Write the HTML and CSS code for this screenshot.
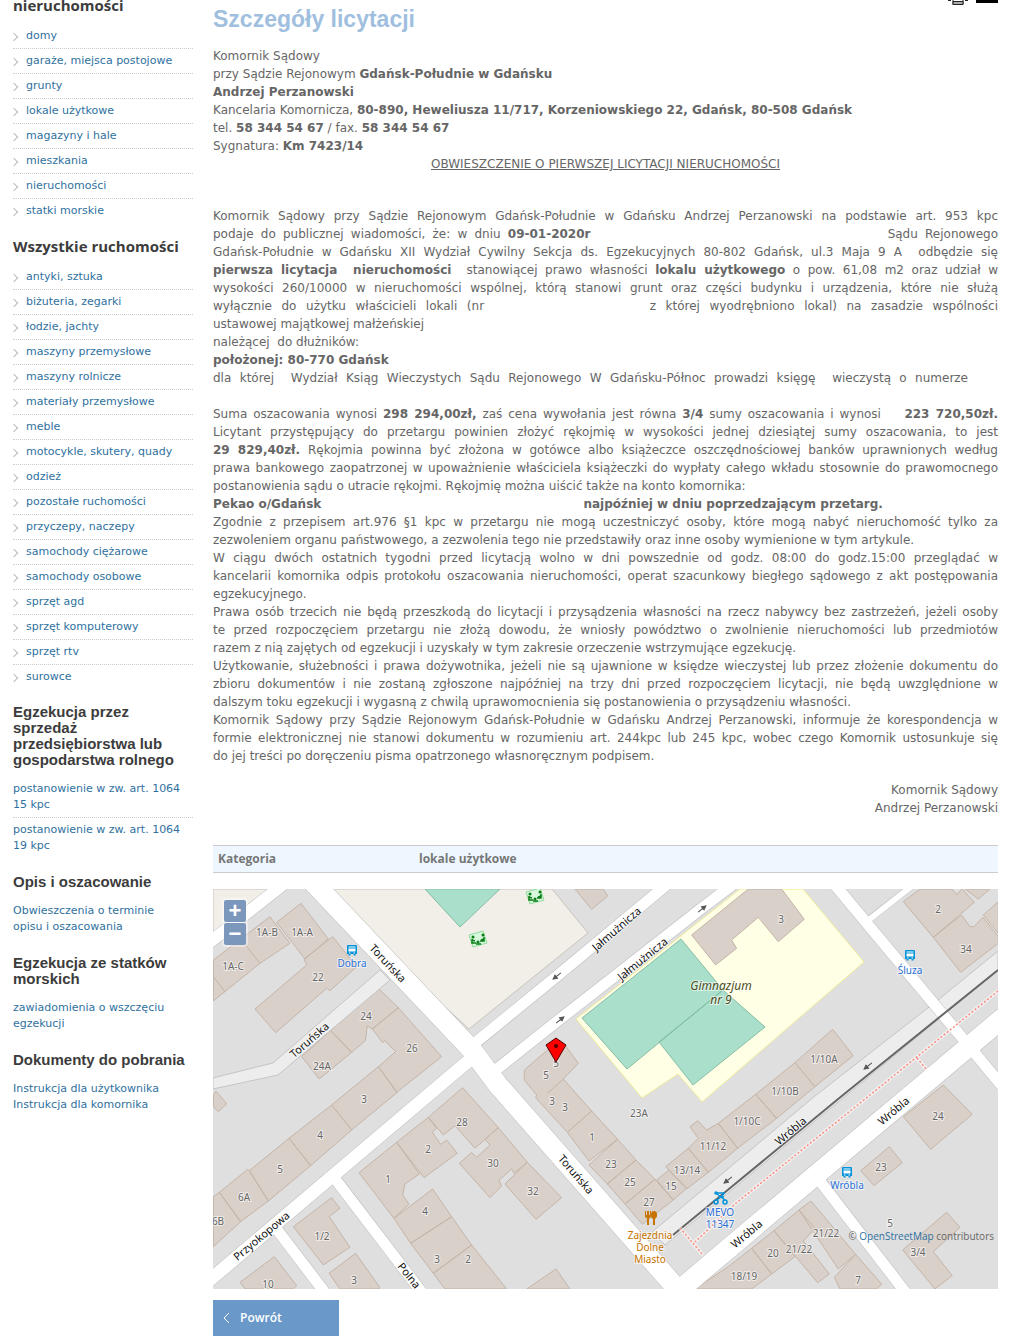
FILE: index.html
```html
<!DOCTYPE html>
<html lang="pl">
<head>
<meta charset="utf-8">
<title>Szczegóły licytacji</title>
<link rel="stylesheet" href="styles.css">
</head>
<body>
<div class="page">
<nav class="sidebar">
  <h2 class="menu-title">nieruchomości</h2>
  <ul class="menu">
    <li><a href="#">domy</a></li>
    <li><a href="#">garaże, miejsca postojowe</a></li>
    <li><a href="#">grunty</a></li>
    <li><a href="#">lokale użytkowe</a></li>
    <li><a href="#">magazyny i hale</a></li>
    <li><a href="#">mieszkania</a></li>
    <li><a href="#">nieruchomości</a></li>
    <li><a href="#">statki morskie</a></li>
  </ul>
  <h2 class="menu-title">Wszystkie ruchomości</h2>
  <ul class="menu">
    <li><a href="#">antyki, sztuka</a></li>
    <li><a href="#">biżuteria, zegarki</a></li>
    <li><a href="#">łodzie, jachty</a></li>
    <li><a href="#">maszyny przemysłowe</a></li>
    <li><a href="#">maszyny rolnicze</a></li>
    <li><a href="#">materiały przemysłowe</a></li>
    <li><a href="#">meble</a></li>
    <li><a href="#">motocykle, skutery, quady</a></li>
    <li><a href="#">odzież</a></li>
    <li><a href="#">pozostałe ruchomości</a></li>
    <li><a href="#">przyczepy, naczepy</a></li>
    <li><a href="#">samochody ciężarowe</a></li>
    <li><a href="#">samochody osobowe</a></li>
    <li><a href="#">sprzęt agd</a></li>
    <li><a href="#">sprzęt komputerowy</a></li>
    <li><a href="#">sprzęt rtv</a></li>
    <li><a href="#">surowce</a></li>
  </ul>
  <section class="block">
    <h2>Egzekucja przez sprzedaż przedsiębiorstwa lub gospodarstwa rolnego</h2>
    <ul class="links divided">
      <li><a href="#">postanowienie w zw. art. 1064 15 kpc</a></li>
      <li><a href="#">postanowienie w zw. art. 1064 19 kpc</a></li>
    </ul>
  </section>
  <section class="block">
    <h2>Opis i oszacowanie</h2>
    <ul class="links"><li><a href="#">Obwieszczenia o terminie opisu i oszacowania</a></li></ul>
  </section>
  <section class="block">
    <h2>Egzekucja ze statków morskich</h2>
    <ul class="links"><li><a href="#">zawiadomienia o wszczęciu egzekucji</a></li></ul>
  </section>
  <section class="block">
    <h2>Dokumenty do pobrania</h2>
    <ul class="links">
      <li><a href="#">Instrukcja dla użytkownika</a></li>
      <li><a href="#">Instrukcja dla komornika</a></li>
    </ul>
  </section>
</nav>

<main class="content">
  <header class="head">
    <h1>Szczegóły licytacji</h1>
    <div class="tools">
      <a href="#" aria-label="Drukuj"><svg width="20" height="6" viewBox="0 0 20 6"><path d="M0 0h3v1H0zM17 0h3v1h-3z" fill="#222"/><path d="M5 0v4.500h10V0" fill="#fff" stroke="#222"/><path d="M5 1.500h10v3H5z" fill="#aaa" stroke="#222"/></svg></a>
      <a href="#" aria-label="Wyślij"><svg width="22" height="6" viewBox="0 0 22 6"><path d="M0 0h22v3H0z" fill="#000"/></svg></a>
    </div>
  </header>

  <div class="notice">
    <p>Komornik Sądowy<br>
    przy Sądzie Rejonowym <b>Gdańsk-Południe w Gdańsku</b><br>
    <b>Andrzej Perzanowski</b><br>
    Kancelaria Komornicza, <b>80-890, Heweliusza 11/717, Korzeniowskiego 22, Gdańsk, 80-508 Gdańsk</b><br>
    tel. <b>58 344 54 67</b> / fax. <b>58 344 54 67</b><br>
    Sygnatura: <b>Km 7423/14</b></p>
    <p class="title">OBWIESZCZENIE O PIERWSZEJ LICYTACJI NIERUCHOMOŚCI</p>

    <p class="body">
      <span class="line">Komornik Sądowy przy Sądzie Rejonowym Gdańsk-Południe w Gdańsku Andrzej Perzanowski na podstawie art. 953 kpc</span>
      <span class="line">podaje do publicznej wiadomości, że: w dniu <b>09-01-2020r</b><span class="gap wide"></span> Sądu Rejonowego</span>
      <span class="line">Gdańsk-Południe w Gdańsku XII Wydział Cywilny Sekcja ds. Egzekucyjnych 80-802 Gdańsk, ul.3 Maja 9 A &nbsp;odbędzie się</span>
      <span class="line"><b>pierwsza licytacja &nbsp;nieruchomości</b> &nbsp;stanowiącej prawo własności <b>lokalu użytkowego</b> o pow. 61,08 m2 oraz udział w</span>
      <span class="line">wysokości 260/10000 w nieruchomości wspólnej, którą stanowi grunt oraz części budynku i urządzenia, które nie służą</span>
      <span class="line">wyłącznie do użytku właścicieli lokali (nr<span class="gap medium"></span> z której wyodrębniono lokal) na zasadzie wspólności</span>
      <span class="line end">ustawowej majątkowej małżeńskiej</span>
      <span class="line end">należącej &nbsp;do dłużników:</span>
      <span class="line end"><b>położonej: 80-770 Gdańsk</b></span>
      <span class="line short">dla której &nbsp;Wydział Ksiąg Wieczystych Sądu Rejonowego W Gdańsku-Północ prowadzi księgę &nbsp;wieczystą o numerze</span>
    </p>
    <p class="body">
      <span class="line">Suma oszacowania wynosi <b>298 294,00zł,</b> zaś cena wywołania jest równa <b>3/4</b> sumy oszacowania i wynosi &nbsp; &nbsp;<b>223&nbsp;720,50zł.</b></span>
      <span class="line">Licytant przystępujący do przetargu powinien złożyć rękojmię w wysokości jednej dziesiątej sumy oszacowania, to jest</span>
      <span class="line"><b>29 829,40zł.</b> Rękojmia powinna być złożona w gotówce albo książeczce oszczędnościowej banków uprawnionych według</span>
      <span class="line">prawa bankowego zaopatrzonej w upoważnienie właściciela książeczki do wypłaty całego wkładu stosownie do prawomocnego</span>
      <span class="line end">postanowienia sądu o utracie rękojmi. Rękojmię można uiścić także na konto komornika:</span>
      <span class="line end"><b>Pekao o/Gdańsk<span class="gap account"></span> najpóźniej w dniu poprzedzającym przetarg.</b></span>
      <span class="line">Zgodnie z przepisem art.976 §1 kpc w przetargu nie mogą uczestniczyć osoby, które mogą nabyć nieruchomość tylko za</span>
      <span class="line end">zezwoleniem organu państwowego, a zezwolenia tego nie przedstawiły oraz inne osoby wymienione w tym artykule.</span>
      <span class="line">W ciągu dwóch ostatnich tygodni przed licytacją wolno w dni powszednie od godz. 08:00 do godz.15:00 przeglądać w</span>
      <span class="line">kancelarii komornika odpis protokołu oszacowania nieruchomości, operat szacunkowy biegłego sądowego z akt postępowania</span>
      <span class="line end">egzekucyjnego.</span>
      <span class="line">Prawa osób trzecich nie będą przeszkodą do licytacji i przysądzenia własności na rzecz nabywcy bez zastrzeżeń, jeżeli osoby</span>
      <span class="line">te przed rozpoczęciem przetargu nie złożą dowodu, że wniosły powództwo o zwolnienie nieruchomości lub przedmiotów</span>
      <span class="line end">razem z nią zajętych od egzekucji i uzyskały w tym zakresie orzeczenie wstrzymujące egzekucję.</span>
      <span class="line">Użytkowanie, służebności i prawa dożywotnika, jeżeli nie są ujawnione w księdze wieczystej lub przez złożenie dokumentu do</span>
      <span class="line">zbioru dokumentów i nie zostaną zgłoszone najpóźniej na trzy dni przed rozpoczęciem licytacji, nie będą uwzględnione w</span>
      <span class="line end">dalszym toku egzekucji i wygasną z chwilą uprawomocnienia się postanowienia o przysądzeniu własności.</span>
      <span class="line">Komornik Sądowy przy Sądzie Rejonowym Gdańsk-Południe w Gdańsku Andrzej Perzanowski, informuje że korespondencja w</span>
      <span class="line">formie elektronicznej nie stanowi dokumentu w rozumieniu art. 244kpc lub 245 kpc, wobec czego Komornik ustosunkuje się</span>
      <span class="line end">do jej treści po doręczeniu pisma opatrzonego własnoręcznym podpisem.</span>
    </p>
    <p class="signature">Komornik Sądowy<br>Andrzej Perzanowski</p>
  </div>

  <table class="facts"><tbody><tr><th scope="row">Kategoria</th><td>lokale użytkowe</td></tr></tbody></table>

  <div class="map">
    <svg class="tiles" viewBox="213 889 785 400" role="img" aria-label="Mapa okolicy">
      <defs>
        <g id="bus"><path d="M-4-5h8a1 1 0 0 1 1 1v8H3.500v1.500H1.500V4h-3v1.500h-2V4H-5v-8a1 1 0 0 1 1-1z" fill="#0092da"/><path d="M-3.500-3.500h7v1h-7zM-3.500-1.500h7v3h-7zM-3 2.500h1.500v1H-3zM1.500 2.500H3v1H1.500z" fill="#fff"/></g>
        <g id="play"><path d="M-9-4 5-8 9 4-5 8z" fill="#d6f7dc" stroke="#8fdc9c"/><g fill="none" stroke="#0a7d16" stroke-width="1.500"><path d="M-6 0v4h4M-6 1l3 1M6-2v4H2M6 0 3 1M-2 5h5"/></g><g fill="#0a7d16"><circle cx="-5" cy="-2" r="1.500"/><circle cx="5" cy="-4" r="1.500"/><circle cx="0" cy="3" r="1.500"/></g></g>
        <path id="arrow" d="M-5 0h7M1-2l4 2-4 2z" fill="#555" stroke="#555"/>
      </defs>
      <path d="M213 889h785v400H213z" fill="#e0dfdf"/>
      <g fill="#f2efe9" stroke="#c9c4bb"><path d="M213 889h56l-56 45zM330 889H552l36 44L469 1029 432 995z"/></g>
      <g fill="#ffffe5" stroke="#eeeb9a"><path d="M740 889h63l61 73-162 140-24-28-36 24-66-79z"/></g>
      <g fill="#aae0cb" stroke="#83bda6"><path d="M425 889h75l-40 38zM582 1018l99-79 42 51-96 79zM659 1042l64-52 42 37-72 58z"/></g>
      <!-- buildings -->
      <g fill="#d9d0c9" stroke="#c4b4a8" stroke-width="3">
        <g transform="translate(210 885) scale(.3333)">
          <path d="M10 225 180 95 240 175 150 235 10 348zM95 165l55 70M10 275l35 45M200 112l73-57 82 107-70 60zM135 372 290 240 282 222 368 155 440 245 360 317 350 310 197 443z"/>
          <path d="M505 310 565 368 487 432 472 423 466 467 425 502 362 437zM362 437l63 65-97 80-53-67zM565 368 695 515 560 622 505 545 557 500 525 467 518 473 487 432zM365 660 505 545 562 622 425 735z"/>
        </g>
        <g transform="translate(210 1085) scale(.3333)">
          <path d="M237 160 365 60l60 75-123 107zM118 257l119-97 65 82-127 106zM28 322l85-69 5 4 57 91-83 62zM10 335l18-13 64 88-82 75zM10 30l8-12 32 39-25 23-15-15z"/>
          <path d="M250 425 365 338l25 32-32 25 62 92-80 53zM357 565l80-60 71 100v7H390zM90 592l103-77 67 87-10 10H105z"/>
          <path d="M447 263l113-91 68 95-43 30-7 33 19 27-45 43zM560 172l95-75 25 33-13 12 25 36 18-13 32 40-100 73zM655 97 758 8l107 120-70 62-60-68-35 28z"/>
          <path d="M748 235l37-33 15 15 40-37-15-17 40-35 87 104-40 33-7-13-38 33 8 18-35 35zM552 400l116-88 57 83-123 80zM602 475l123-80 60 85-115 85zM670 565l115-85 105 132H705z"/>
        </g>
        <g transform="translate(470 1085) scale(.3333)">
          <path d="M105 297l67-65 103 106-77 65zM258 552l42 60H170zM163-45 163-15 200 30 197 38 292 142 365 78 280-18 325-65 285-120 250-120z"/>
          <path d="M232 25l48-43M292 142l73-64 78 85-86 65zM357 240l86-77 55 62-86 72zM412 297l86-72 57 58-90 74zM465 357l90-74 55 62-93 73zM560 285l37-30 53 55-40 35zM587 245l68-55 60 72-65 50zM655 190l30-30-25-35 23-18 27 28 35-20 58 75-88 72zM745 115 857 28l63 72-117 90zM857 28 975-67l60 72-115 95z"/>
        </g>
        <g transform="translate(470 885) scale(.3333)"><path d="M315 12h85l13 21-48 40zM665 150 835 12H935L1003 103 925 170 865 97 785 165 800 190 737 240z"/></g>
        <g transform="translate(735 885) scale(.3333)"><path d="M180 533l113-100 62 79-115 93zM505 50l50-38h95l15 16 17-16 36 40-123 105zM595 157l85-67 25 35h12l27-28 46 58v20L677 262zM745 90l45-40v95zM690 12h75l-35 30z"/></g>
        <g transform="translate(735 1085) scale(.3333)"><path d="M505 95 625 0l87 88-125 105zM377 257l86-72 39 48-85 69zM503 495 635 382l40 45-80 73 57 72-52 40zM117 437l75-62 48 55-35 38 78 99-35 26zM192 375l36-27 134 160-52 44zM50 490l67-53 63 78-70 52zM-20 545l70-55 60 77-60 45h-170zM298 577l64-69 78 89-15 15H315z"/></g>
      </g>
      <!-- streets: casing first, then surface -->
      <g fill="#ededed" stroke="#c4c4c4"><path d="M380 970 273 1063l-60 15v11l65-14 112-95zM998 951l-60 49-123 96-80 67-83 69 13 13 333-275z"/></g>
      <g fill="none" stroke="#bfbdbd">
        <path d="M310 879l162 171 26 35 180 205M670 1298 735 1243 998 1022l10-8" stroke-width="21"/>
        <path d="M205 946l75-59 8-7" stroke-width="13"/>
        <path d="M205 1284 440 1085 472 1058" stroke-width="14"/>
        <path d="M474 1044l83-68 113-94M485 1079l12-10 63-50 142-111 38-29M830 879l134 161 38 46M820 1181l86 112M333 1176l90 118M276 1228l50 66" stroke-width="12"/>
        <path d="M868 920l44-34" stroke-width="7"/>
      </g>
      <g fill="none" stroke="#fff">
        <path d="M310 879l162 171 26 35 180 205M670 1298 735 1243 998 1022l10-8" stroke-width="20"/>
        <path d="M205 946l75-59 8-7" stroke-width="12"/>
        <path d="M205 1284 440 1085 472 1058" stroke-width="13"/>
        <path d="M470 1047l87-71 113-94M485 1079l12-10 63-50 142-111 38-29M830 879l134 161 38 46M816 1176l90 117M329 1171l94 123M272 1223l54 71" stroke-width="11"/>
        <path d="M866 922l46-36" stroke-width="6"/>
      </g>
      <path d="M998 970 843 1095 735 1184 673 1235" fill="none" stroke="#666" stroke-width="2"/>
      <path d="M998 991 870 1095 735 1204 695 1242M917 1058l10 12M680 1228l23 27" fill="none" stroke="#fff" stroke-opacity=".5" stroke-width="4"/>
      <path d="M998 991 870 1095 735 1204 695 1242M917 1058l10 12M680 1228l23 27" fill="none" stroke="#f98c80" stroke-width="1.500" stroke-dasharray="2 2"/>
      <use href="#arrow" transform="translate(557 976) rotate(141)"/><use href="#arrow" transform="translate(560 1020) rotate(-39)"/>
      <use href="#arrow" transform="translate(702 909) rotate(-39)"/><use href="#arrow" transform="translate(868 1066) rotate(141)"/><use href="#arrow" transform="translate(728 1180) rotate(141)"/>
      <use href="#bus" x="352" y="950"/><use href="#bus" x="910" y="955"/><use href="#bus" x="847" y="1172"/>
      <use href="#play" x="478" y="939"/><use href="#play" x="535" y="896"/>
      <g fill="none" stroke="#0092da" stroke-width="1.500"><circle cx="716" cy="1202" r="2"/><circle cx="725" cy="1202" r="2"/><circle cx="716" cy="1193" r="1"/><path d="M716 1193h9M717 1194l8 6M724 1194l-7 6M719 1197h5"/></g>
      <path d="M645 1211v5q0 2 2 2v7h2v-7q2 0 2-2v-5h-1v4h-1v-4h-2v4h-1v-4zM654 1211c4 0 4 7 1 8v6h-2v-6c-3-1-3-8 1-8z" fill="#c77400"/>
      <g class="house">
        <text x="267" y="936">1A-B</text><text x="302" y="936">1A-A</text><text x="233" y="970">1A-C</text><text x="318" y="981">22</text><text x="366" y="1020">24</text><text x="412" y="1052">26</text><text x="322" y="1070">24A</text>
        <text x="364" y="1103">3</text><text x="320" y="1139">4</text><text x="280" y="1173">5</text><text x="244" y="1201">6A</text><text x="218" y="1225">6B</text><text x="322" y="1240">1/2</text><text x="268" y="1288">10</text><text x="354" y="1284">3</text>
        <text x="388" y="1183">1</text><text x="428" y="1153">2</text><text x="462" y="1126">28</text><text x="493" y="1167">30</text><text x="533" y="1195">32</text><text x="425" y="1215">4</text><text x="437" y="1263">3</text><text x="468" y="1263">2</text>
        <text x="556" y="1067">5</text><text x="546" y="1079">5</text><text x="552" y="1105">3</text><text x="565" y="1111">3</text><text x="592" y="1141">1</text><text x="611" y="1168">23</text><text x="630" y="1186">25</text><text x="649" y="1206">27</text><text x="671" y="1190">15</text><text x="687" y="1174">13/14</text><text x="713" y="1150">11/12</text><text x="639" y="1117">23A</text><text x="747" y="1125">1/10C</text><text x="785" y="1095">1/10B</text><text x="824" y="1063">1/10A</text>
        <text x="781" y="923">3</text><text x="938" y="913">2</text><text x="966" y="953">34</text><text x="938" y="1120">24</text><text x="881" y="1171">23</text><text x="890" y="1227">5</text><text x="918" y="1256">3/4</text><text x="826" y="1237">21/22</text><text x="799" y="1253">21/22</text><text x="773" y="1257">20</text><text x="744" y="1280">18/19</text><text x="858" y="1284">7</text>
      </g>
      <g class="street">
        <text transform="translate(385 966) rotate(47)">Toruńska</text><text transform="translate(573 1177) rotate(49)">Toruńska</text><text transform="translate(312 1043) rotate(-41)">Toruńska</text>
        <text transform="translate(264 1239) rotate(-40)">Przyokopowa</text><text transform="translate(406 1278) rotate(52)">Polna</text>
        <text transform="translate(619 932) rotate(-41)">Jałmużnicza</text><text transform="translate(645 962) rotate(-39)">Jałmużnicza</text>
        <text transform="translate(793 1134) rotate(-40)">Wróbla</text><text transform="translate(896 1114) rotate(-40)">Wróbla</text><text transform="translate(749 1237) rotate(-40)">Wróbla</text>
      </g>
      <g class="stop"><text x="352" y="967">Dobra</text><text x="910" y="974">Śluza</text><text x="847" y="1189">Wróbla</text><text x="720" y="1216">MEVO</text><text x="720" y="1228">11347</text></g>
      <g class="food"><text x="650" y="1239">Zajezdnia</text><text x="650" y="1251">Dolne</text><text x="650" y="1263">Miasto</text></g>
      <g class="school"><text x="721" y="990">Gimnazjum</text><text x="721" y="1004">nr 9</text></g>
      <path d="M556 1038l10 7-10 17-10-17z" fill="#f00" stroke="#500000"/><circle cx="556" cy="1046" r="2" fill="#500000"/>
    </svg>
    <div class="zoom"><button type="button" aria-label="Przybliż">+</button><button type="button" aria-label="Oddal">−</button></div>
    <div class="attribution">© <a href="#">OpenStreetMap</a> contributors</div>
  </div>

  <button type="button" class="back"><svg width="8" height="12" viewBox="0 0 8 12"><path d="M7 1 2 6l5 5" fill="none" stroke="#fff"/></svg>Powrót</button>
</main>
</div>
</body>
</html>
```
FILE: styles.css
```css
* { box-sizing: border-box; }
body { margin: 0; background: #fff; color: #666; font: 12px/18px "DejaVu Sans", Verdana, sans-serif; }
h1, h2, p, ul { margin: 0; padding: 0; }
ul { list-style: none; }
a { color: #2f71a0; text-decoration: none; }

.page { display: grid; grid-template-columns: 180px minmax(0, 1fr); column-gap: 20px; padding: 0 22px 6px 13px; overflow: hidden; }

.sidebar { margin-top: -3px; font-size: 11px; line-height: 16px; }
.sidebar h2 { color: #3c3c3c; font: bold 15px/16px "Liberation Sans", Arial, sans-serif; margin-bottom: 13px; }
.sidebar .menu-title { font-family: "Open Sans", sans-serif; margin-bottom: 11px; }
.menu { margin-bottom: 14px; }
.menu li { display: flex; align-items: center; height: 25px; border-bottom: 1px dotted #ccc; }
.menu li:last-child { border-bottom-color: transparent; }
.menu li::before { content: ""; width: 5px; height: 5px; margin: 2px 9px 0 -2px; border: solid #bbb; border-width: 1px 1px 0 0; transform: rotate(45deg); }
.block { margin-bottom: 20px; }
.links { padding-right: 8px; }
.divided { padding-right: 0; }
.divided li + li { margin-top: 4px; padding-top: 4px; border-top: 1px dotted #ccc; }

.head { display: flex; justify-content: space-between; align-items: flex-start; height: 47px; }
.head h1 { color: #a0bfdf; font: bold 23px/38px "Liberation Sans", Arial, sans-serif; }
.tools { display: flex; gap: 8px; }
.tools svg { display: block; }
.notice .title { text-align: center; text-decoration: underline; margin-bottom: 34px; }
.notice .body { margin-bottom: 18px; }
.notice .body + .signature { margin-top: -2px; }
.line { display: block; text-align: justify; text-align-last: justify; }
.line.end { text-align-last: left; }
.line.short { padding-right: 30px; }
.gap { display: inline-block; height: 1px; }
.gap.wide { width: 290px; }
.gap.medium { width: 156px; }
.gap.account { width: 258px; }
.signature { text-align: right; }

.facts { width: 100%; margin: 28px 0 16px; border-collapse: collapse; background: #eef7ff; font: bold 12px/16px "Open Sans", sans-serif; color: #777; }
.facts tr { border: solid #ccc; border-width: 1px 0; }
.facts th, .facts td { padding: 5px; text-align: left; height: 27px; }
.facts th { width: 201px; }

.map { position: relative; }
.tiles { display: block; width: 100%; height: auto; }
.tiles text { font-family: "Noto Sans", sans-serif; font-size: 11px; text-anchor: middle; paint-order: stroke; stroke: rgba(255, 255, 255, .6); stroke-width: 2px; }
.house { fill: #666; }
.tiles .house text { font-size: 10px; }
.street { fill: #111; }
.stop { fill: #2a6fd6; }
.tiles .stop text, .tiles .food text { font-size: 10px; }
.food { fill: #c77400; }
.school { fill: #4d4d1a; font-style: italic; }
.tiles .school text { font-size: 12px; }
.zoom { position: absolute; left: 9px; top: 9px; display: grid; gap: 1px; padding: 2px; border-radius: 4px; background: rgba(255, 255, 255, .4); }
.zoom button { width: 22px; height: 22px; padding: 0; border: 0; border-radius: 2px; background: #7b98bc; color: #fff; font: bold 22px/20px "Liberation Sans", Arial, sans-serif; }
.attribution { position: absolute; right: 4px; bottom: 44px; font: 10px/18px "Open Sans", sans-serif; }

.back { display: flex; align-items: center; gap: 10px; width: 126px; height: 36px; margin-top: 11px; padding: 0 9px; border: 0; background: #6a99c9; color: #fff; font: 600 12px/16px "Open Sans", sans-serif; }
```
